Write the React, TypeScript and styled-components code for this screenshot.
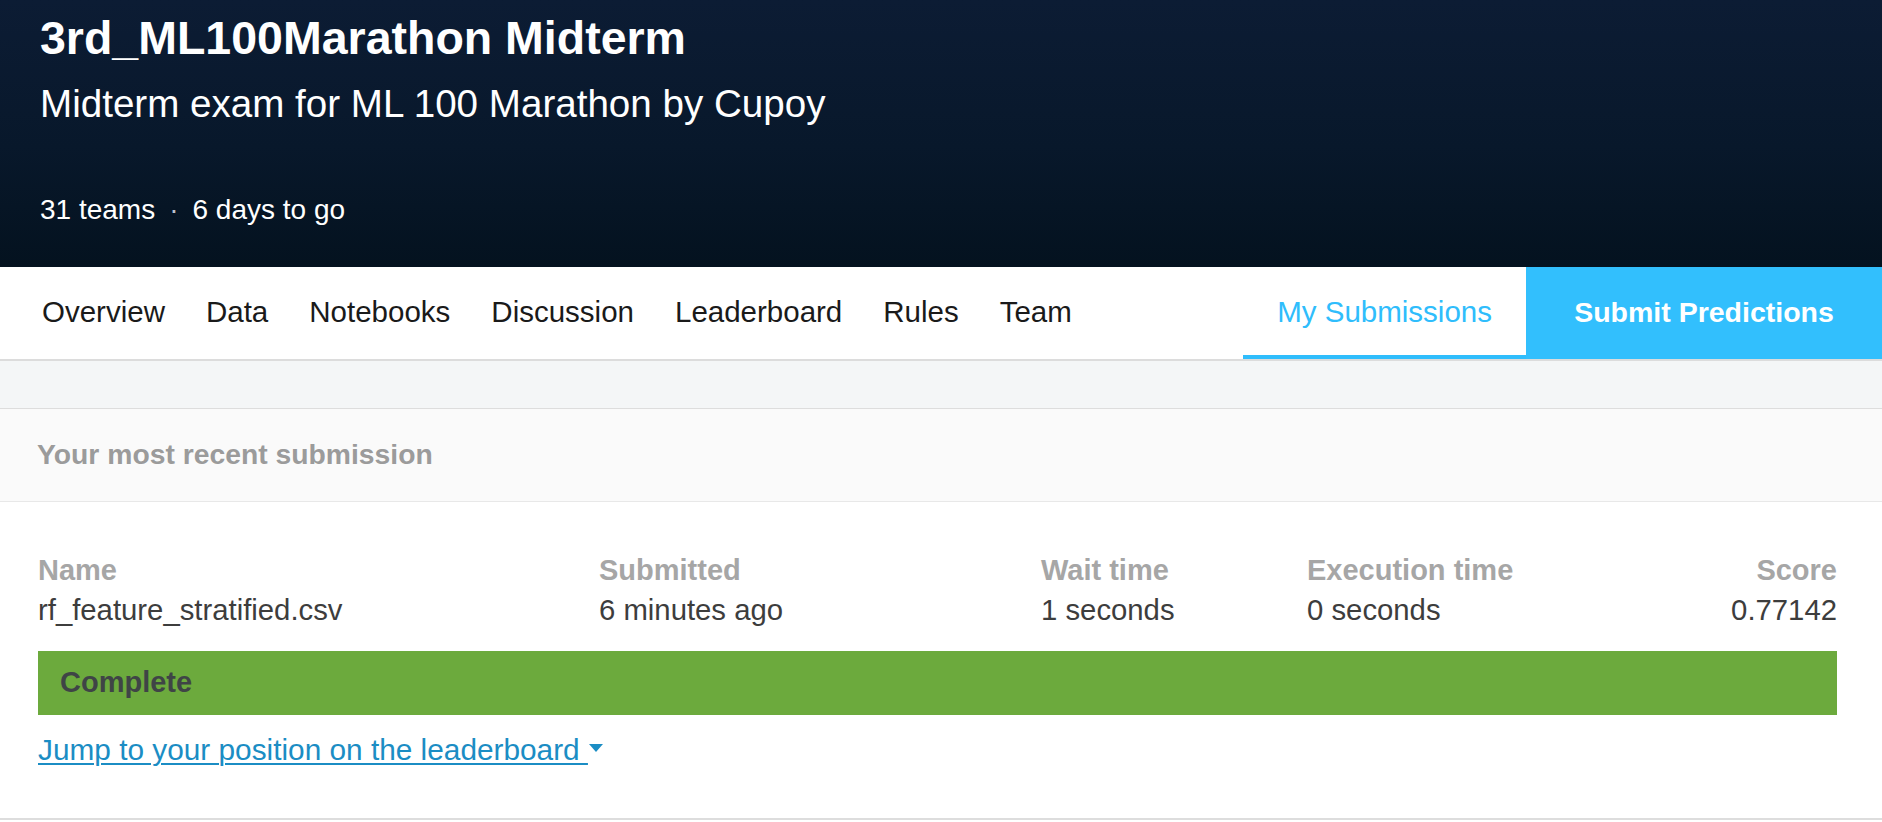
import React from "react";
import styled, { createGlobalStyle } from "styled-components";

const GlobalStyle = createGlobalStyle`
  html, body {
    margin: 0;
    padding: 0;
    background: #ffffff;
    font-family: "Liberation Sans", Arial, sans-serif;
  }
  * { box-sizing: border-box; }
`;

const Page = styled.div`
  width: 100%;
  min-height: 822px;
  background: #ffffff;
`;

const Header = styled.header`
  height: 267px;
  padding: 12px 40px 0 40px;
  background: linear-gradient(180deg, #0c1c34 0%, #08182b 55%, #04121f 100%);
  color: #ffffff;
`;

const Title = styled.h1`
  margin: 0;
  font-size: 46.5px;
  line-height: 52px;
  font-weight: 700;
`;

const Subtitle = styled.p`
  margin: 18px 0 0 0;
  font-size: 38.6px;
  line-height: 44px;
  font-weight: 400;
`;

const Meta = styled.div`
  margin-top: 67px;
  font-size: 28px;
  line-height: 34px;
  display: flex;
  align-items: center;
`;

const Dot = styled.span`
  margin: 0 14px;
  color: #b9c1cc;
`;

const Nav = styled.nav`
  display: flex;
  align-items: stretch;
  height: 94px;
  background: #ffffff;
  border-bottom: 2px solid #dcdcdc;
  padding-left: 42px;
`;

const NavList = styled.div`
  display: flex;
  align-items: stretch;
  gap: 41px;
`;

const NavItem = styled.a<{ $active?: boolean }>`
  display: flex;
  align-items: center;
  padding-top: 2px;
  font-size: 29.5px;
  line-height: 34px;
  color: ${(p) => (p.$active ? "#2fbdfc" : "#1a1a1a")};
  text-decoration: none;
  border-bottom: 4px solid ${(p) => (p.$active ? "#2fbdfc" : "transparent")};
  white-space: nowrap;
`;

const TabItem = styled(NavItem)`
  margin-left: auto;
  padding: 2px 34px 0 34px;
`;

const SubmitButton = styled.a`
  flex: 0 0 356px;
  display: flex;
  align-items: center;
  justify-content: center;
  background: #32bffd;
  color: #ffffff;
  font-size: 28.5px;
  line-height: 34px;
  font-weight: 700;
  text-decoration: none;
  padding-bottom: 2px;
  white-space: nowrap;
`;

const Band = styled.div`
  height: 48px;
  background: #f4f6f7;
  border-bottom: 1px solid #dddddd;
`;

const SectionHeader = styled.div`
  background: #fafafa;
  padding: 28px 45px 30px 37px;
  border-bottom: 1px solid #e8e8e8;
  font-size: 28.3px;
  line-height: 34px;
  font-weight: 700;
  color: #9b9b9b;
`;

const Body = styled.section`
  padding: 48px 45px 48px 38px;
  border-bottom: 2px solid #dddddd;
`;

const Grid = styled.div`
  display: grid;
  grid-template-columns: 561px 442px 266px 1fr auto;
`;

const Cell = styled.div<{ $right?: boolean }>`
  display: flex;
  flex-direction: column;
  align-items: ${(p) => (p.$right ? "flex-end" : "flex-start")};
`;

const Label = styled.span`
  font-size: 29px;
  line-height: 40px;
  font-weight: 700;
  color: #a6a6a6;
  white-space: nowrap;
`;

const Value = styled.span`
  font-size: 29.3px;
  line-height: 40px;
  color: #3d3d3d;
  white-space: nowrap;
`;

const StatusBar = styled.div`
  margin-top: 21px;
  height: 64px;
  padding: 11px 22px 13px 22px;
  background: #6caa3d;
  font-size: 29px;
  line-height: 40px;
  font-weight: 700;
  color: #3f4446;
`;

const JumpLink = styled.a`
  display: inline-flex;
  align-items: center;
  margin-top: 15px;
  font-size: 29.8px;
  line-height: 40px;
  color: #1b8dc4;
  text-decoration: none;
  cursor: pointer;
`;

const JumpText = styled.span`
  text-decoration: underline;
  text-underline-offset: 3px;
  text-decoration-thickness: 2px;
  white-space: pre;
`;

const Caret = styled.svg`
  width: 14px;
  height: 8px;
  margin-left: 1px;
  margin-top: -4px;
`;

const columns = [
  { label: "Name", value: "rf_feature_stratified.csv" },
  { label: "Submitted", value: "6 minutes ago" },
  { label: "Wait time", value: "1 seconds" },
  { label: "Execution time", value: "0 seconds" },
  { label: "Score", value: "0.77142", right: true },
];

const navItems = ["Overview", "Data", "Notebooks", "Discussion", "Leaderboard", "Rules", "Team"];

export default function App() {
  return (
    <Page>
      <GlobalStyle />
      <Header>
        <Title>3rd_ML100Marathon Midterm</Title>
        <Subtitle>Midterm exam for ML 100 Marathon by Cupoy</Subtitle>
        <Meta>
          <span>31 teams</span>
          <Dot>·</Dot>
          <span>6 days to go</span>
        </Meta>
      </Header>
      <Nav>
        <NavList>
          {navItems.map((n) => (
            <NavItem key={n}>{n}</NavItem>
          ))}
        </NavList>
        <TabItem $active>My Submissions</TabItem>
        <SubmitButton>Submit Predictions</SubmitButton>
      </Nav>
      <Band />
      <SectionHeader>Your most recent submission</SectionHeader>
      <Body>
        <Grid>
          {columns.map((c) => (
            <Cell key={c.label} $right={c.right}>
              <Label>{c.label}</Label>
              <Value>{c.value}</Value>
            </Cell>
          ))}
        </Grid>
        <StatusBar>Complete</StatusBar>
        <JumpLink>
          <JumpText>Jump to your position on the leaderboard </JumpText>
          <Caret viewBox="0 0 14 8">
            <path d="M0 0 L14 0 L7 8 Z" fill="#1b8dc4" />
          </Caret>
        </JumpLink>
      </Body>
    </Page>
  );
}
